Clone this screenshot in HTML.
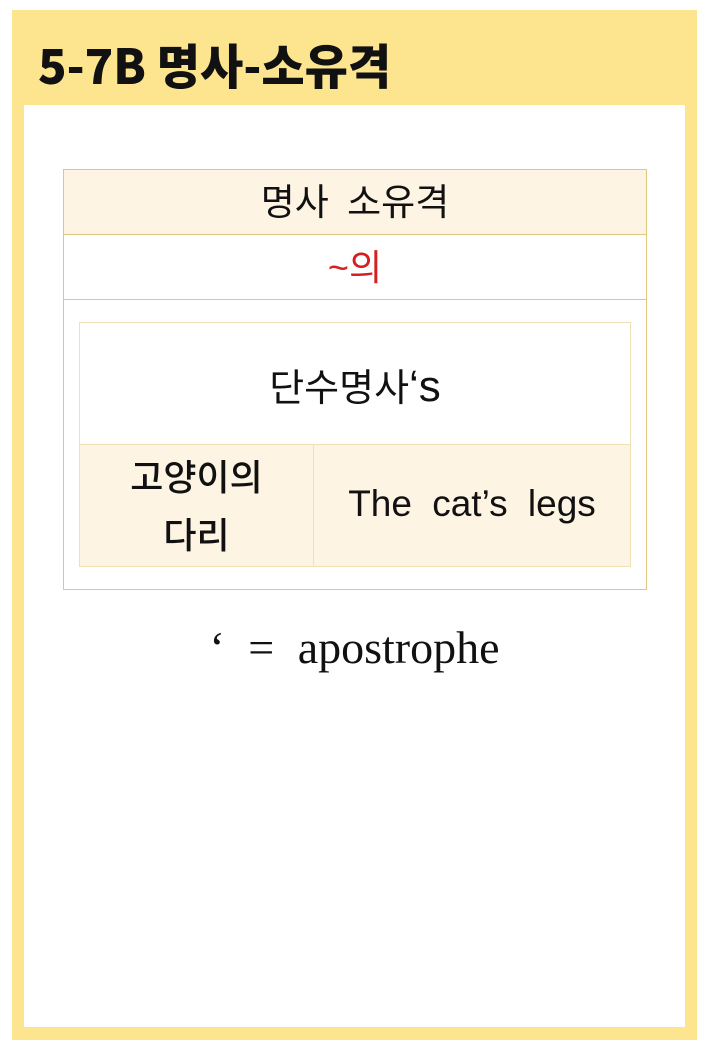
<!DOCTYPE html>
<html><head><meta charset="utf-8"><style>
html,body{margin:0;padding:0;background:#fff;width:709px;height:1054px;overflow:hidden}
body{position:relative;font-family:"Liberation Sans","Noto Sans CJK KR",sans-serif}
.frame{position:absolute;left:12px;top:10px;width:685px;height:1030px;background:#fde48e}
.inner{position:absolute;left:24px;top:105px;width:661px;height:922px;background:#fff}
.title{position:absolute;left:38px;top:28px;font-family:"Noto Sans CJK KR",sans-serif;font-weight:900;font-size:48px;line-height:70px;color:#111;white-space:nowrap;transform:scaleX(0.98);transform-origin:left}
.box{position:absolute;box-sizing:border-box}
.t{position:absolute;left:0;right:0;text-align:center;font-family:"Liberation Sans","Noto Sans CJK KR",sans-serif;white-space:nowrap}
</style></head><body>
<div class="frame"></div>
<div class="inner"></div>
<div class="title">5-7B 명사-소유격</div>

<div class="box" style="left:63px;top:169px;width:584px;height:421px;border:1px solid #e0c77e;background:#fff"></div>
<div class="box" style="left:64px;top:170px;width:582px;height:65px;background:#fdf4e3;border-bottom:1px solid #e0c77e"></div>
<div class="t" style="left:63px;width:584px;top:179px;font-size:37px;line-height:48px;color:#111;word-spacing:8px">명사 소유격</div>
<div class="box" style="left:64px;top:299px;width:582px;height:1px;background:#e0c77e"></div>
<div class="t" style="left:63px;width:584px;top:244px;font-size:36px;line-height:48px;color:#d42020">~의</div>

<div class="box" style="left:79px;top:322px;width:552px;height:245px;border:1px solid #f0e0b8;background:#fff"></div>
<div class="box" style="left:80px;top:444px;width:550px;height:122px;background:#fdf4e3;border-top:1px solid #f0e0b8"></div>
<div class="box" style="left:313px;top:444px;width:1px;height:122px;background:#f0e0b8"></div>
<div class="t" style="left:79px;width:552px;top:362px;font-size:38px;line-height:50px;color:#111">단수명사<span style="font-size:44px">‘s</span></div>
<div class="t" style="left:80px;width:233px;top:449px;font-size:36px;line-height:58px;color:#111;font-weight:500">고양이의<br>다리</div>
<div class="t" style="left:314px;width:316px;top:481px;font-size:37px;line-height:46px;color:#111;word-spacing:10px">The cat’s legs</div>

<div class="t" style="left:0;width:709px;top:620px;font-family:'Liberation Serif',serif;font-size:46px;line-height:56px;color:#111;word-spacing:12px">‘ = apostrophe</div>
</body></html>
